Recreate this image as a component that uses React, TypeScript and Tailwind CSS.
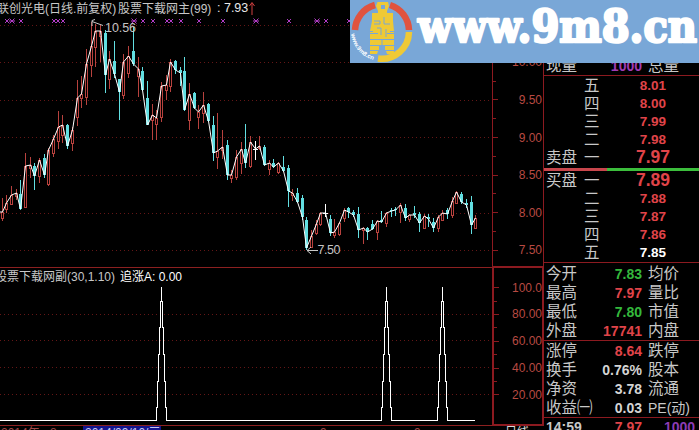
import React from 'react';
import clsx from 'clsx';

// x, high, low, body top, body bottom, direction (u = up, d = down, x = flat)
type Candle = [number, number, number, number, number, 'u' | 'd' | 'x'];

const candles: Candle[] = [
    [2, 198, 221, 212, 218, 'u'], [6, 195, 213, 203, 209, 'u'], [11, 186, 205, 195, 204, 'u'],
    [16, 189, 200, 193, 196, 'u'], [20, 180, 210, 194, 209, 'd'], [25, 153, 208, 166, 207, 'u'],
    [30, 157, 178, 165, 168, 'u'], [34, 163, 190, 166, 176, 'd'], [39, 158, 183, 160, 176, 'u'],
    [44, 154, 178, 158, 175, 'd'], [48, 148, 186, 150, 184, 'u'], [53, 135, 157, 139, 153, 'u'],
    [58, 111, 149, 127, 141, 'u'], [62, 115, 143, 125, 135, 'u'], [67, 124, 149, 125, 146, 'd'],
    [72, 127, 151, 130, 143, 'u'], [77, 80, 126, 98, 117, 'u'], [81, 76, 108, 94, 98, 'u'],
    [86, 49, 105, 64, 97, 'u'], [91, 22, 77, 46, 65, 'u'], [95, 24, 67, 31, 47, 'u'],
    [100, 25, 62, 31, 36, 'u'], [105, 30, 93, 33, 75, 'd'], [109, 51, 89, 59, 79, 'u'],
    [114, 41, 78, 61, 74, 'd'], [119, 79, 120, 79, 92, 'd'], [123, 54, 99, 62, 95, 'u'],
    [128, 46, 78, 56, 73, 'u'], [133, 27, 66, 51, 64, 'd'], [138, 57, 97, 69, 76, 'u'],
    [142, 67, 91, 71, 90, 'd'], [147, 81, 125, 98, 125, 'd'], [152, 104, 140, 115, 120, 'u'],
    [156, 110, 140, 118, 124, 'u'], [161, 82, 122, 86, 117, 'u'], [166, 75, 100, 85, 90, 'u'],
    [170, 59, 92, 62, 86, 'u'], [175, 60, 74, 61, 70, 'd'], [180, 67, 86, 70, 73, 'd'],
    [184, 57, 111, 71, 110, 'd'], [189, 83, 130, 94, 120, 'u'], [194, 92, 109, 93, 108, 'd'],
    [198, 105, 129, 112, 117, 'u'], [203, 92, 123, 105, 113, 'u'], [208, 103, 122, 104, 121, 'd'],
    [213, 116, 161, 125, 153, 'd'], [217, 113, 169, 151, 157, 'u'], [222, 130, 159, 147, 150, 'u'],
    [227, 140, 180, 145, 175, 'd'], [231, 170, 183, 175, 178, 'u'], [236, 150, 180, 157, 177, 'u'],
    [241, 142, 174, 149, 163, 'u'], [245, 124, 168, 149, 163, 'd'], [250, 136, 168, 142, 166, 'u'],
    [255, 141, 160, 149, 150, 'x'], [259, 136, 150, 146, 148, 'u'], [264, 145, 166, 147, 165, 'd'],
    [269, 160, 175, 163, 169, 'u'], [273, 159, 168, 163, 167, 'd'], [278, 162, 174, 163, 172, 'u'],
    [283, 156, 172, 167, 171, 'd'], [288, 165, 207, 168, 191, 'd'], [292, 189, 201, 193, 195, 'u'],
    [297, 188, 203, 193, 202, 'd'], [302, 195, 220, 198, 217, 'd'], [306, 217, 250, 220, 248, 'd'],
    [311, 230, 248, 236, 247, 'u'], [316, 220, 235, 224, 233, 'u'], [320, 212, 226, 213, 224, 'u'],
    [325, 204, 217, 213, 214, 'x'], [330, 215, 236, 219, 233, 'd'], [334, 219, 238, 232, 235, 'u'],
    [339, 222, 236, 223, 234, 'u'], [344, 208, 222, 210, 218, 'u'], [348, 207, 218, 208, 212, 'd'],
    [353, 210, 217, 212, 215, 'd'], [358, 207, 238, 214, 230, 'd'], [363, 227, 244, 228, 230, 'u'],
    [367, 227, 240, 228, 232, 'd'], [372, 220, 230, 224, 229, 'd'], [377, 220, 240, 221, 232, 'u'],
    [381, 211, 223, 220, 222, 'd'], [386, 212, 227, 213, 223, 'u'], [391, 208, 217, 210, 211, 'd'],
    [395, 207, 216, 209, 210, 'd'], [400, 203, 223, 205, 212, 'u'], [405, 204, 221, 208, 218, 'd'],
    [409, 214, 222, 215, 219, 'u'], [414, 206, 218, 213, 215, 'd'], [419, 212, 232, 214, 223, 'd'],
    [424, 214, 229, 216, 228, 'u'], [428, 214, 227, 217, 219, 'd'], [433, 218, 232, 222, 228, 'd'],
    [438, 215, 232, 217, 228, 'u'], [442, 210, 221, 213, 220, 'u'], [447, 208, 219, 210, 214, 'd'],
    [452, 197, 218, 201, 215, 'u'], [456, 191, 204, 192, 203, 'u'], [461, 192, 204, 194, 202, 'd'],
    [466, 199, 208, 203, 205, 'd'], [471, 196, 234, 202, 225, 'd'], [475, 215, 229, 218, 228, 'u'],
];

const priceGrid = [25, 62, 100, 137, 175, 213, 250];
const marks = [7, 21, 54, 58, 63, 143, 153, 167, 171, 181, 199, 223, 289, 326, 349];
const boldMarks = [12, 134, 256, 317];
const spikes = [161, 386, 442];

const priceAxis = ['10.00', '', '9.50', '', '9.00', '', '8.50', '', '8.00', '', '7.50'];
const subAxis = ['100.0', '', '80.00', '', '60.00', '', '40.00', '', '20.00'];

const asks = [['五', '8.01'], ['四', '8.00'], ['三', '7.99'], ['二', '7.98'], ['一', '7.97']];
const bids = [['一', '7.89'], ['二', '7.88'], ['三', '7.87'], ['四', '7.86'], ['五', '7.85']];

const RED = 'text-[#e04449]';
const GREEN = 'text-[#34b83c]';
const GRAY = 'text-[#d4d4d4]';

const dayStats = [
    ['今开', '7.83', GREEN, '均价'],
    ['最高', '7.97', RED, '量比'],
    ['最低', '7.80', GREEN, '市值'],
    ['外盘', '17741', RED, '内盘'],
];
const baseStats = [
    ['涨停', '8.64', RED, '跌停'],
    ['换手', '0.76%', GRAY, '股本'],
    ['净资', '3.78', GRAY, '流通'],
    ['收益㈠', '0.03', GRAY, 'PE(动)'],
];

const closeLine = '0,212 ' + candles.map(([x, , , top, bottom, dir]) => `${x + 0.5},${dir === 'd' ? bottom : top}`).join(' ');

// each spike narrows in whole-pixel steps on its way up
const spikeLine =
    'M0 420.5' +
    spikes
        .map((x) => {
            const c = x + 0.5;
            return `H${c - 5}V407H${c - 4}V381H${c - 3}V354H${c - 2}V327H${c - 1}V301H${c}V287V301H${c + 1}V327H${c + 2}V354H${c + 3}V381H${c + 4}V407H${c + 5}V420.5`;
        })
        .join('') +
    'H475';

const PriceChart = () => (
    <svg className="block" width="492" height="251" viewBox="0 16 492 251">
        <g stroke="#641616" strokeDasharray="1 3" shapeRendering="crispEdges">
            {priceGrid.map((y) => (
                <line key={y} x1="0" x2="492" y1={y + 0.5} y2={y + 0.5} />
            ))}
        </g>
        <g stroke="#b03cc4" strokeWidth="1">
            {marks.map((x) => (
                <path key={x} d={`M${x - 2} 19l4 4m0-4l-4 4`} />
            ))}
            {boldMarks.map((x) => (
                <path key={x} d={`M${x - 2.5} 18.5l5 5m0-5l-5 5M${x - 3} 21h6`} />
            ))}
        </g>
        <g shapeRendering="crispEdges">
            {candles.map(([x, high, low, top, bottom, dir]) => {
                if (dir === 'u') {
                    return (
                        <g key={x} stroke="#b8423e" fill="#000">
                            <path d={`M${x + 0.5} ${high}V${low}`} />
                            <rect x={x - 0.5} y={top + 0.5} width="2" height={bottom - top} />
                        </g>
                    );
                }
                if (dir === 'x') {
                    return <path key={x} stroke="#fff" d={`M${x + 0.5} ${high}V${low}M${x - 2} ${top + 0.5}h5`} />;
                }
                return (
                    <g key={x} fill="#62dfe2">
                        <rect x={x} y={high} width="1" height={low - high} />
                        <rect x={x - 1} y={top} width="3" height={bottom - top} />
                    </g>
                );
            })}
        </g>
        <polyline points={closeLine} fill="none" stroke="#fff" strokeWidth="1" />
        <g fill="none" stroke="#c8c8c8">
            <path d="M103 25.5L92 21.5M92 26v-5.500l3-1" />
            <path d="M318 250.500H307M311 247l-4 3.500l4 3.500" />
        </g>
        <g fill="#c4c4c4" fontSize="12.5" fontFamily="Liberation Sans, sans-serif">
            <text x="105" y="32" textLength="31">10.56</text>
            <text x="317.500" y="254" textLength="23">7.50</text>
        </g>
    </svg>
);

const SignalChart = () => (
    <svg className="block" width="492" height="140" viewBox="0 285 492 140">
        <g stroke="#641616" strokeDasharray="1 3" shapeRendering="crispEdges">
            {[314, 340, 367, 394].map((y) => (
                <line key={y} x1="0" x2="492" y1={y + 0.5} y2={y + 0.5} />
            ))}
        </g>
        <path d={spikeLine} fill="none" stroke="#fff" shapeRendering="crispEdges" />
    </svg>
);

const AxisLabels = ({ labels, rowClass }: { labels: string[]; rowClass: string }) => (
    <>
        {labels.map((label, i) => (
            <div key={i} className={clsx('flex items-center justify-between', rowClass)}>
                <span className={clsx('h-px bg-[#8c1a20]', label ? 'w-[5px]' : 'w-[3px]')} />
                <span className="leading-none">{label}</span>
            </div>
        ))}
    </>
);

const BookRow = ({ side, level, price }: { side?: string; level: string; price: string }) => (
    <div className="flex h-[18px] items-center">
        <span className="w-[38px] shrink-0">{side}</span>
        <span className="w-[16px] shrink-0">{level}</span>
        <span
            className={clsx(
                'text-right font-bold',
                side ? 'w-[70px] text-[17.500px]' : 'w-[66px] text-[13.5px]',
                price === '7.85' ? 'text-white' : RED
            )}
        >
            {price}
        </span>
    </div>
);

const StatRow = ({ row }: { row: string[] }) => (
    <div className="flex h-[19px] items-center whitespace-nowrap">
        <span className="w-[46px] shrink-0">{row[0]}</span>
        <span className={clsx('w-[50px] shrink-0 text-right text-[14px] font-bold', row[2])}>{row[1]}</span>
        <span className={clsx('ml-[6px]', row[3].startsWith('PE') && 'text-[14px]')}>{row[3]}</span>
    </div>
);

const Banner = () => (
    <div className="absolute top-0 right-0 h-[63px] w-[349px] bg-[#79a7d7]">
        <svg width="349" height="63" viewBox="350 0 349 63">
            <g fill="none" strokeWidth="6.500">
                <path stroke="#e0533f" d="M355 30A27.300 27.300 0 0 1 375 5" />
                <path stroke="#e0533f" d="M390 5A27.300 27.300 0 0 1 409 30" />
                <path stroke="#efc935" d="M409 32A27.300 27.300 0 0 1 378 58.500" />
            </g>
            <g fill="#efc935">
                <path fillRule="evenodd" d="M377.500 2h10.500l1 4-2 5v2h6v8l1 10h-4v1h4v7h-24v-7h3v-1h-3l2-10v-8h6v-2l-2-5zM381 5v4h4v-4z" />
                <path d="M370 40h24v5h-24zM370 46h9v4h-9zM385 46h9v4h-9zM370 51h8l-1 3h-7zM386 51h8v3h-7z" />
            </g>
            <path fill="none" stroke="#79a7d7" strokeWidth="1" d="M374 21h6v3h-6M384 17v7h6M377 28h4v7M386 29v8M370 33.500h8M387 33.500h7M382 40v6" />
            <path id="logo-arc" fill="none" d="M351 33A31 31 0 0 0 378 61" />
            <text fill="#fff" fontSize="6" fontWeight="bold" fontFamily="Liberation Sans, sans-serif">
                <textPath href="#logo-arc" startOffset="1" textLength="36">www.9m8.cn</textPath>
            </text>
            <text
                x="418"
                y="42"
                textLength="279"
                lengthAdjust="spacingAndGlyphs"
                fill="#fff"
                stroke="#fff"
                strokeWidth="2.600"
                strokeLinejoin="round"
                fontSize="45"
                fontWeight="bold"
                fontFamily="DejaVu Serif, serif"
            >
                www.9m8.cn
            </text>
        </svg>
    </div>
);

const App: React.FC = () => {
    return (
        <div className="relative flex h-[430px] w-[699px] overflow-hidden bg-black font-['Liberation_Sans','Noto_Sans_CJK_SC',sans-serif] text-[#c8c8c8]">
            <div className="flex w-[492px] shrink-0 flex-col overflow-hidden text-[12px] whitespace-nowrap">
                <div className="-ml-[3px] flex h-[16px] items-center pt-[1px] leading-none">
                    <span className="w-[121px]">联创光电(日线.前复权)</span>
                    <span className="w-[99px]">股票下载网主(99)</span>
                    <span className="text-[12.500px] text-[#e8e8e8]">: 7.93</span>
                    <svg className="ml-[1px]" width="6" height="16" viewBox="0 0 6 16" fill="none" stroke="#d04040">
                        <path d="M3 14V2M.5 5L3 1.500L5.500 5" />
                    </svg>
                </div>
                <PriceChart />
                <div className="h-[158px] border-t border-[#8c2020]">
                    <div className="-ml-[5px] flex h-[17px] items-center gap-[4px] leading-none">
                        <span className="w-[121px]">股票下载网副(30,1.10)</span>
                        <span className="text-white">追涨A: 0.00</span>
                    </div>
                    <SignalChart />
                </div>
                <div className="flex h-[5px] items-start overflow-hidden border-t border-[#8c2020] leading-[14px] text-[#a04848]">
                    <span className="w-[50px] shrink-0 pl-[1px]">2014年</span>
                    <span className="w-[33px] shrink-0">8</span>
                    <span className="w-[78px] shrink-0 bg-[#14148c] pl-[2px] text-[#c8c8f0]">2014/09/10/三</span>
                    <span className="w-[159px] shrink-0" />
                    <span className="w-[94px] shrink-0">9</span>
                    <span>9</span>
                </div>
            </div>

            <div className="flex w-[52px] shrink-0 flex-col text-[12px] text-[#b84a42]">
                <div className="h-[266px] border-r border-l border-[#8c1a20] pt-[53px] pr-[1px]">
                    <AxisLabels labels={priceAxis} rowClass="h-[18.800px]" />
                </div>
                <div className="h-[160px] border-2 border-[#8c1a20] pt-[13px]">
                    <AxisLabels labels={subAxis} rowClass="h-[13.400px]" />
                </div>
                <div className="h-[4px] overflow-hidden pl-[13px] leading-[13px] text-[#d8d8d8]">日线</div>
            </div>

            <div className="flex min-w-0 flex-1 flex-col overflow-hidden text-[15.500px] leading-none">
                <div className="mt-[57px] flex h-[18px] shrink-0 items-center pl-[2px] whitespace-nowrap">
                    <span className="w-[46px]">现量</span>
                    <span className="w-[50px] text-right text-[14px] font-bold text-[#a03cb4]">1000</span>
                    <span className="ml-[6px]">总量</span>
                </div>
                <div className="border-t border-[#8c1a20] pt-[1px] pl-[2px]">
                    {asks.map(([level, price], i) => (
                        <BookRow key={price} side={i === 4 ? '卖盘' : undefined} level={level} price={price} />
                    ))}
                </div>
                <div className="mt-[1px] flex h-[3px] shrink-0">
                    <span className="w-[63px] bg-[#c8464c]" />
                    <span className="flex-1 bg-[#3cbe3c]" />
                </div>
                <div className="pt-[1px] pl-[2px]">
                    {bids.map(([level, price], i) => (
                        <BookRow key={price} side={i === 0 ? '买盘' : undefined} level={level} price={price} />
                    ))}
                </div>
                <div className="border-t border-[#8c1a20] pt-[1px] pl-[2px]">
                    {dayStats.map((row) => (
                        <StatRow key={row[0]} row={row} />
                    ))}
                </div>
                <div className="border-t border-[#8c1a20] pl-[2px]">
                    {baseStats.map((row) => (
                        <StatRow key={row[0]} row={row} />
                    ))}
                </div>
                <div className="flex h-[18px] shrink-0 items-center border-t border-[#8c1a20] pl-[2px] text-[14px] font-bold">
                    <span className="w-[46px]">14:59</span>
                    <span className={clsx('w-[50px] text-right', RED)}>7.97</span>
                    <span className="ml-[22px] text-[#8c3cb4]">1000</span>
                </div>
            </div>
            <Banner />
        </div>
    );
};

export default App;
